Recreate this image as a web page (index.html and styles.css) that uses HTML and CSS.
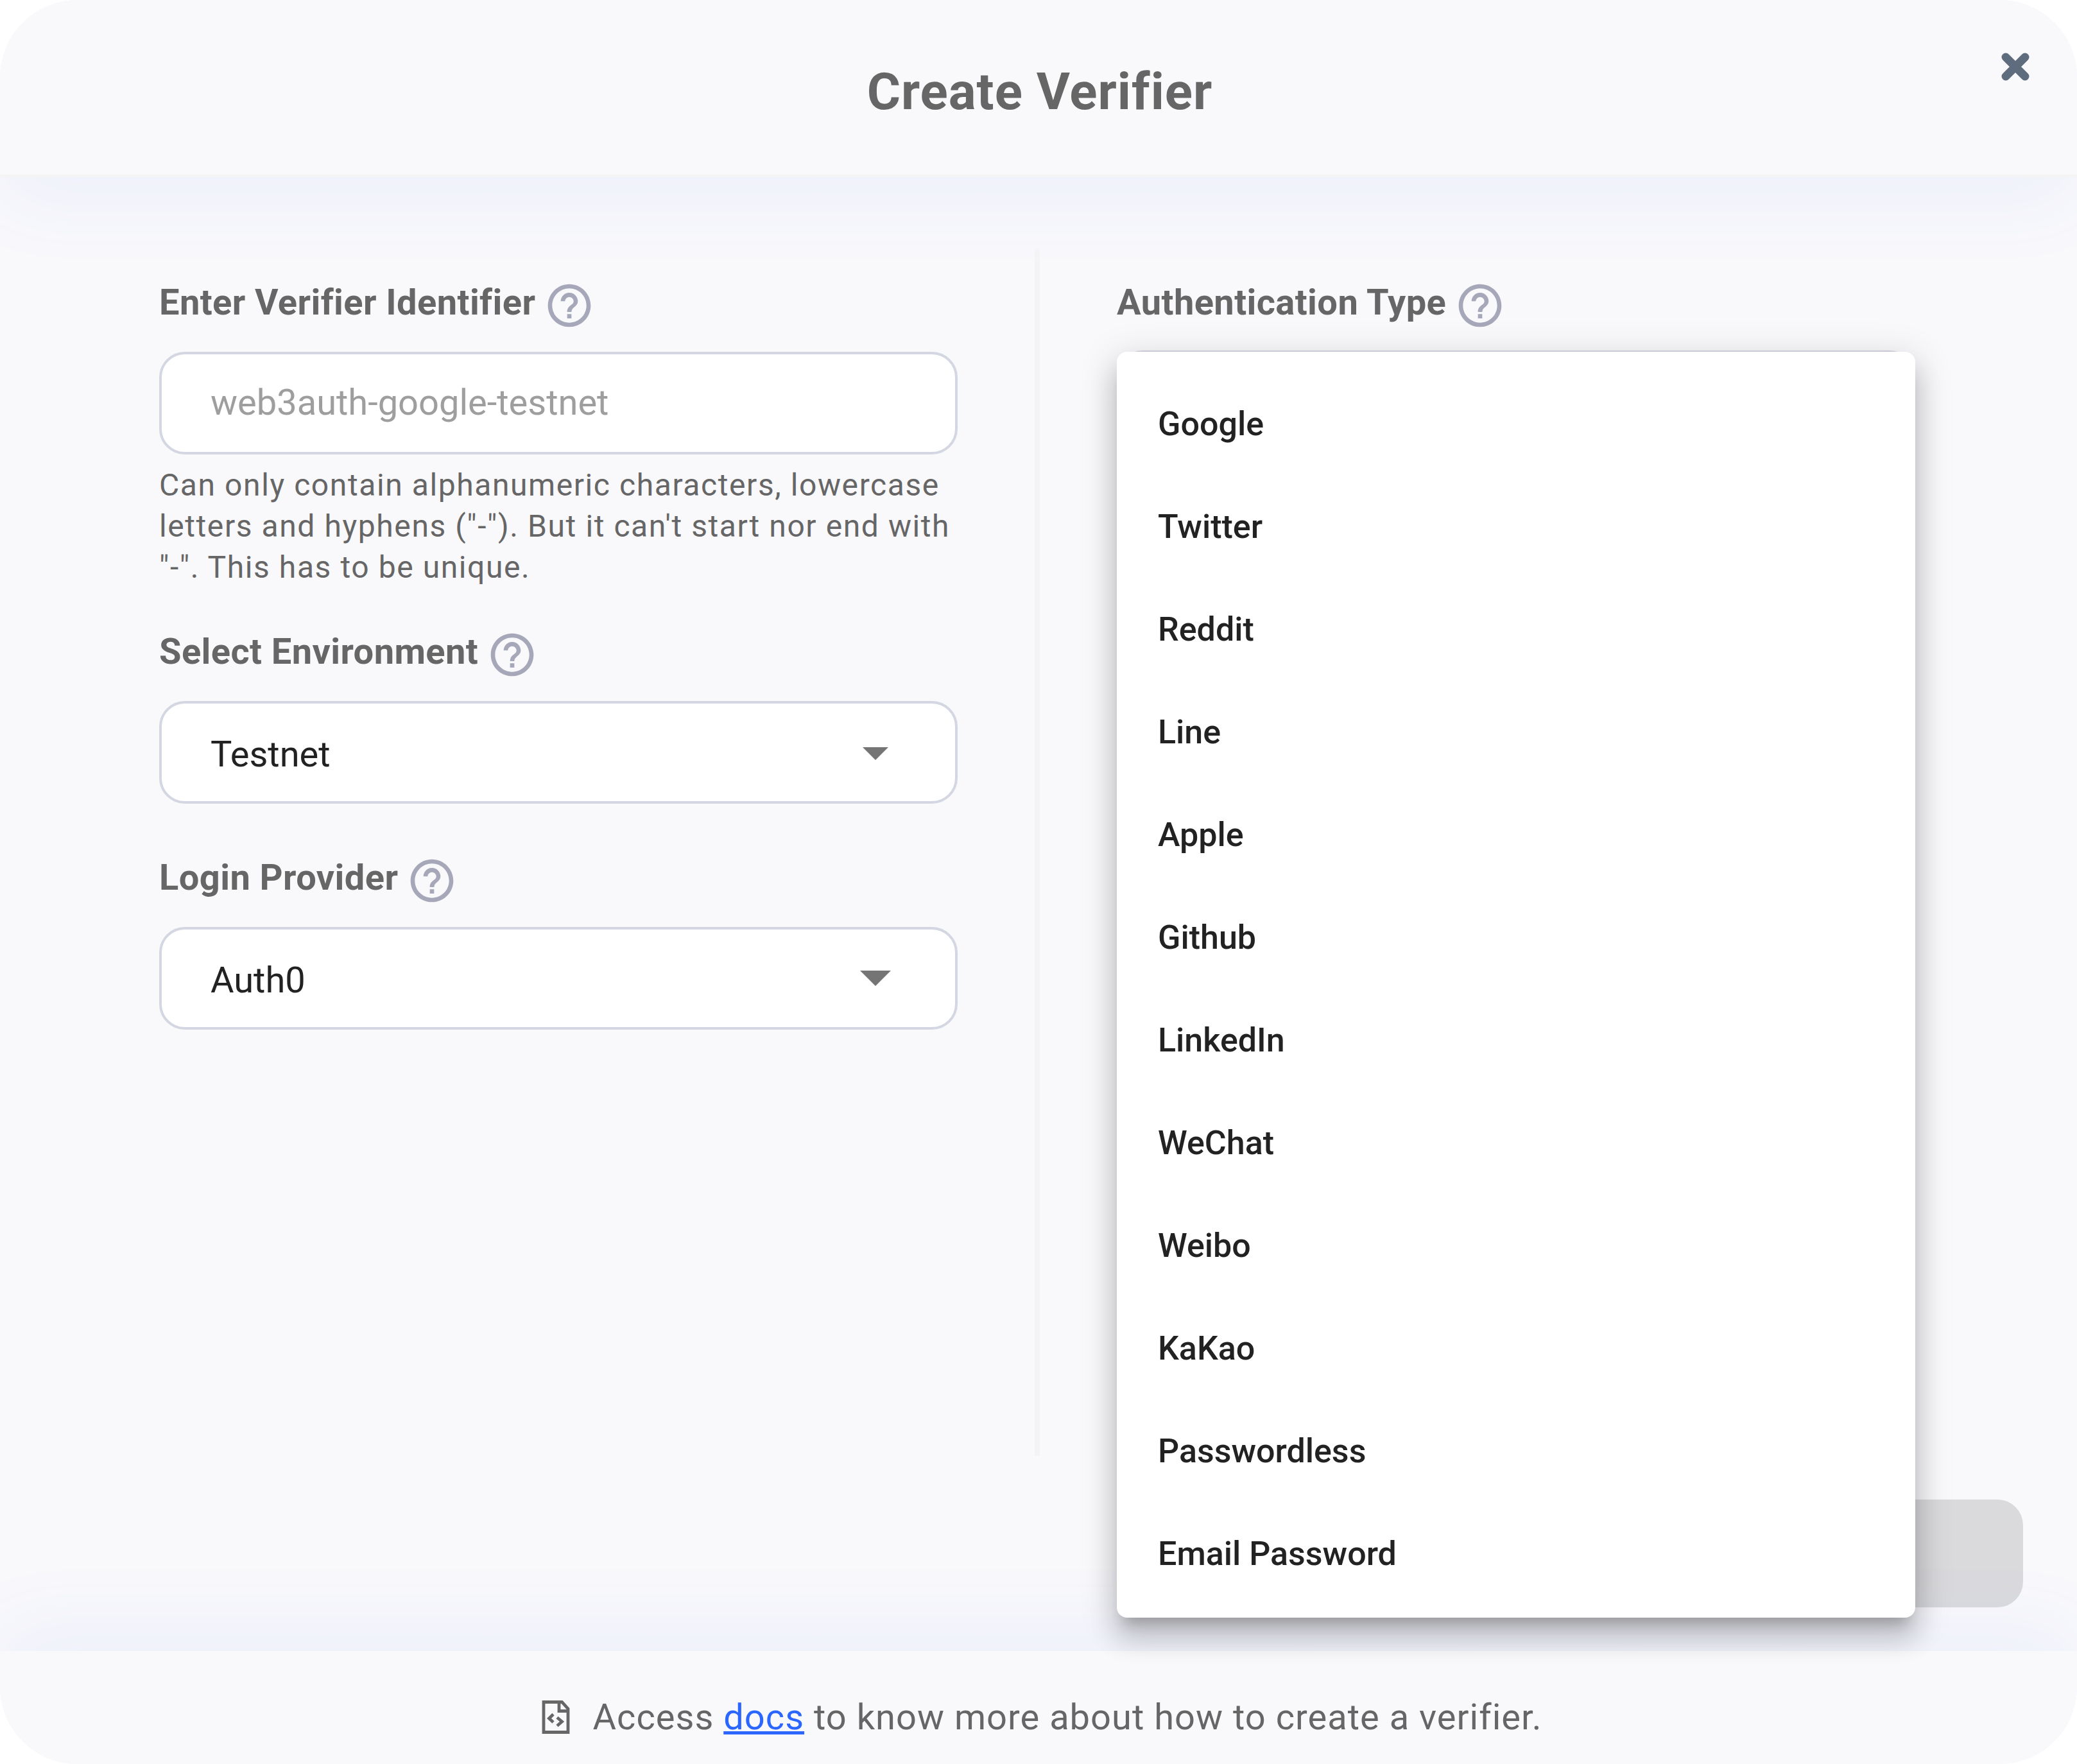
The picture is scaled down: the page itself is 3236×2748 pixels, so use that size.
FILE: index.html
```
<!DOCTYPE html>
<html lang="en">
<head>
    <meta charset="UTF-8">
    <meta name="viewport" content="width=device-width, initial-scale=1.0">
    <title>Create Verifier</title>
    <link rel="stylesheet" href="styles.css">
</head>

<body>
    <!-- shared help icon -->
    <svg class="defs" aria-hidden="true">
        <symbol id="help" viewBox="0 0 24 24">
            <path d="M11 18h2v-2h-2v2zm1-16C6.480 2 2 6.480 2 12s4.480 10 10 10 10-4.480 10-10S17.520 2 12 2zm0 18c-4.410 0-8-3.590-8-8s3.590-8 8-8 8 3.590 8 8-3.590 8-8 8zm0-14c-2.210 0-4 1.790-4 4h2c0-1.100.9-2 2-2s2 .9 2 2c0 2-3 1.750-3 5h2c0-2.250 3-2.500 3-5 0-2.210-1.790-4-4-4z"/>
        </symbol>
    </svg>

    <main class="modal">
        <header class="modal-header">
            <h1>Create Verifier</h1>
            <button type="button" class="close-button" aria-label="Close">
                <svg viewBox="0 0 44 44"><path d="M7 7L37 37M37 7L7 37"/></svg>
            </button>
        </header>

        <form class="modal-body">
            <section class="column">
                <div class="field-label"><label for="identifier">Enter Verifier Identifier</label><svg class="help-icon"><use href="#help"/></svg></div>
                <input type="text" id="identifier" class="field" placeholder="web3auth-google-testnet">
                <p class="hint">Can only contain alphanumeric characters, lowercase letters and hyphens ("-"). But it can't start nor end with "-". This has to be unique.</p>

                <div class="field-label"><span>Select Environment</span><svg class="help-icon"><use href="#help"/></svg></div>
                <div class="field select environment">
                    <span>Testnet</span>
                    <svg class="arrow" viewBox="0 0 40 20"><path d="M0 0h40L20 20z"/></svg>
                </div>

                <div class="field-label"><span>Login Provider</span><svg class="help-icon"><use href="#help"/></svg></div>
                <div class="field select">
                    <span>Auth0</span>
                    <svg class="arrow arrow-large" viewBox="0 0 40 20"><path d="M0 0h40L20 20z"/></svg>
                </div>
            </section>

            <div class="divider"></div>

            <section class="column">
                <div class="field-label auth-label"><span>Authentication Type</span><svg class="help-icon"><use href="#help"/></svg></div>
                <div class="menu-anchor">
                    <div class="field select"></div>
                    <ul class="menu">
                        <li>Google</li>
                        <li>Twitter</li>
                        <li>Reddit</li>
                        <li>Line</li>
                        <li>Apple</li>
                        <li>Github</li>
                        <li>LinkedIn</li>
                        <li>WeChat</li>
                        <li>Weibo</li>
                        <li>KaKao</li>
                        <li>Passwordless</li>
                        <li>Email Password</li>
                    </ul>
                </div>
            </section>
        </form>

        <div class="actions">
            <button type="button" class="create-button" disabled></button>
        </div>

        <footer class="modal-footer">
            <svg class="doc-icon" viewBox="0 0 44 52"><path d="M3 2.500h28.500L41 13v36.500H3zM27 2.500v14h14"/><path d="M18 21.500L11.500 28l6.500 6M24 26.500l7.500 6.500-7.500 6.500"/></svg>
            <p>Access <a href="#">docs</a> to know more about how to create a verifier.</p>
        </footer>
    </main>
</body>

</html>
```
FILE: styles.css
```
* {
    box-sizing: border-box;
}

body {
    margin: 0;
    background-color: #ffffff;
    font-family: Roboto, "Liberation Sans", sans-serif;
    font-size: 56px;
    color: #666666;
}

h1, p, ul {
    margin: 0;
    padding: 0;
}

.defs {
    display: none;
}

.modal {
    display: flex;
    flex-direction: column;
    height: 2748px;
    border-radius: 120px;
    overflow: hidden;
    background-color: #f9f9fc;
}

.modal-header {
    position: relative;
    display: flex;
    justify-content: center;
    height: 276px;
    padding-top: 96px;
    padding-left: 4px;
    background-color: #f9f9fc;
    border-bottom: 4px solid #f4f4f5;
    box-shadow: 0 40px 120px rgba(50, 80, 225, 0.06);
}

h1 {
    font-size: 80px;
    line-height: 94px;
    font-weight: bold;
    letter-spacing: 1px;
}

.close-button {
    position: absolute;
    top: 82px;
    right: 74px;
    width: 44px;
    height: 44px;
    padding: 0;
    border: none;
    background: none;
}

.close-button svg {
    display: block;
    stroke: #5f6c7e;
    stroke-width: 13;
    stroke-linecap: round;
}

.modal-body {
    position: relative;
    z-index: 2;
    display: flex;
    height: 1880px;
    margin-top: 112px;
    padding: 0 248px;
}

.column {
    width: 1244px;
    padding-top: 48px;
}

.divider {
    width: 8px;
    margin: 0 120px;
    background-color: #f4f4f5;
}

.field-label {
    display: flex;
    align-items: center;
    gap: 13px;
    height: 80px;
    margin-bottom: 32px;
    line-height: 64px;
    font-weight: bold;
    letter-spacing: 0.42px;
}

.field-label label,
.field-label span {
    height: 74px;
}

.auth-label {
    margin-bottom: 30px;
}

.help-icon {
    width: 80px;
    height: 80px;
    fill: #a6a7b8;
}

.field {
    display: block;
    width: 100%;
    height: 160px;
    padding: 0 76px 2px;
    border: 4px solid #d4d6e2;
    border-radius: 40px;
    background-color: #ffffff;
    font-family: inherit;
    font-size: 56px;
}

.field::placeholder {
    color: #9e9e9e;
}

.hint {
    margin: 16px 0 64px;
    font-size: 48px;
    line-height: 64px;
    letter-spacing: 1.58px;
}

.select {
    display: flex;
    align-items: center;
    justify-content: space-between;
    padding: 4px 104px 0 76px;
    color: #222222;
}

.select span {
    padding-top: 2px;
}

.environment {
    margin-bottom: 80px;
}

.arrow {
    width: 40px;
    height: 20px;
    fill: #757575;
}

.arrow-large {
    width: 48px;
    height: 24px;
    margin-right: -4px;
    margin-bottom: 4px;
}

.menu-anchor {
    position: relative;
}

.menu {
    position: absolute;
    top: 2px;
    left: 0;
    width: 1244px;
    padding: 33px 0 19px;
    border-radius: 16px;
    background-color: #ffffff;
    box-shadow: 0 20px 20px -12px rgba(0, 0, 0, 0.2),
        0 32px 40px 4px rgba(0, 0, 0, 0.14),
        0 12px 56px 8px rgba(0, 0, 0, 0.12);
    list-style: none;
}

.menu li {
    height: 160px;
    padding-left: 64px;
    font-size: 52px;
    line-height: 160px;
    font-weight: 500;
    color: #222222;
}

.actions {
    display: flex;
    justify-content: flex-end;
    height: 304px;
    padding: 68px 84px 0;
}

.create-button {
    position: relative;
    z-index: 1;
    width: 520px;
    height: 168px;
    border: none;
    border-radius: 40px;
    background-color: rgba(0, 0, 0, 0.12);
}

.modal-footer {
    display: flex;
    align-items: center;
    justify-content: center;
    height: 176px;
    padding-top: 30px;
    padding-left: 10px;
    background-color: #f9f9fc;
    box-shadow: 0 -40px 120px rgba(50, 80, 225, 0.06);
    letter-spacing: 1.02px;
}

.doc-icon {
    width: 44px;
    height: 52px;
    margin-right: 36px;
    fill: none;
    stroke: #666666;
    stroke-width: 4.8;
}

.modal-footer a {
    color: #2b66ff;
}
```
